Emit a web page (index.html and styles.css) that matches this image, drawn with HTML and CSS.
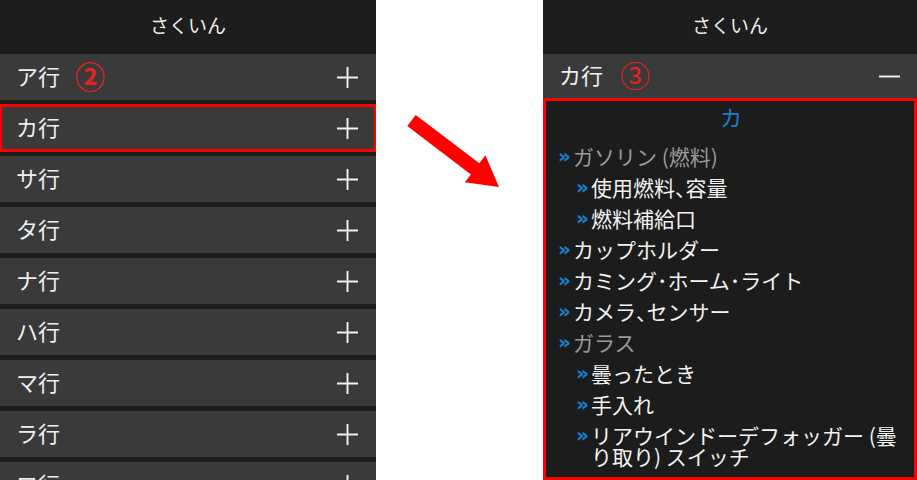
FILE: index.html
```html
<!DOCTYPE html>
<html lang="ja">
<head>
<meta charset="UTF-8">
<meta name="viewport" content="width=device-width, initial-scale=1.0">
<title>さくいん</title>
<link rel="stylesheet" href="styles.css">
</head>
<body>
<div class="screen">
  <!-- before: index list, all closed -->
  <div class="panel panel-left">
    <div class="panel-header">さくいん</div>
    <div class="row"><span class="row-label">ア行</span><span class="step step-bold">②</span><svg class="toggle" viewBox="0 0 22 22"><path d="M0 11H22M11 0V22"/></svg></div>
    <div class="row row-marked"><span class="row-label">カ行</span><svg class="toggle" viewBox="0 0 22 22"><path d="M0 11H22M11 0V22"/></svg></div>
    <div class="row"><span class="row-label">サ行</span><svg class="toggle" viewBox="0 0 22 22"><path d="M0 11H22M11 0V22"/></svg></div>
    <div class="row"><span class="row-label">タ行</span><svg class="toggle" viewBox="0 0 22 22"><path d="M0 11H22M11 0V22"/></svg></div>
    <div class="row"><span class="row-label">ナ行</span><svg class="toggle" viewBox="0 0 22 22"><path d="M0 11H22M11 0V22"/></svg></div>
    <div class="row"><span class="row-label">ハ行</span><svg class="toggle" viewBox="0 0 22 22"><path d="M0 11H22M11 0V22"/></svg></div>
    <div class="row"><span class="row-label">マ行</span><svg class="toggle" viewBox="0 0 22 22"><path d="M0 11H22M11 0V22"/></svg></div>
    <div class="row"><span class="row-label">ラ行</span><svg class="toggle" viewBox="0 0 22 22"><path d="M0 11H22M11 0V22"/></svg></div>
    <div class="row"><span class="row-label">ワ行</span><svg class="toggle" viewBox="0 0 22 22"><path d="M0 11H22M11 0V22"/></svg></div>
  </div>

  <div class="gutter">
    <svg class="arrow" viewBox="376 0 167 200">
      <polygon points="415.7,114.9 479.3,163.2 485.4,155.3 499,187 464.8,182.3 470.9,174.4 407.3,126.1"/>
    </svg>
  </div>

  <!-- after: カ行 opened -->
  <div class="panel panel-right">
    <div class="panel-header">さくいん</div>
    <div class="row"><span class="row-label">カ行</span><span class="step step-thin">③</span><svg class="toggle" viewBox="0 0 22 22"><path d="M0 11H22"/></svg></div>
    <div class="index-body">
      <div class="index-kana">カ</div>
      <ul class="index-list">
        <li><div class="entry entry-group"><span class="mark">»</span><span>ガソリン (燃料)</span></div>
          <ul class="index-list sub">
            <li><div class="entry"><span class="mark">»</span><span>使用燃料<span class="punct">、</span>容量</span></div></li>
            <li><div class="entry"><span class="mark">»</span><span>燃料補給口</span></div></li>
          </ul>
        </li>
        <li><div class="entry"><span class="mark">»</span><span>カップホルダー</span></div></li>
        <li><div class="entry"><span class="mark">»</span><span>カミング･ホーム･ライト</span></div></li>
        <li><div class="entry"><span class="mark">»</span><span>カメラ<span class="punct">、</span>センサー</span></div></li>
        <li><div class="entry entry-group"><span class="mark">»</span><span>ガラス</span></div>
          <ul class="index-list sub">
            <li><div class="entry"><span class="mark">»</span><span>曇ったとき</span></div></li>
            <li><div class="entry"><span class="mark">»</span><span>手入れ</span></div></li>
            <li><div class="entry"><span class="mark">»</span><span>リアウインドーデフォッガー (曇り取り) スイッチ</span></div></li>
          </ul>
        </li>
      </ul>
    </div>
  </div>
</div>
</body>
</html>
```

FILE: styles.css
```css
/* index screens */
body {
  margin: 0;
  background: #fff;
  font-family: "Noto Sans CJK JP", sans-serif;
}

.screen {
  display: flex;
  height: 480px;
  overflow: hidden;
}

.panel {
  display: flex;
  flex-direction: column;
  background: #1d1d1d;
  overflow: hidden;
}

.panel-left {
  width: 376px;
}

.panel-right {
  width: 374px;
}

.gutter {
  width: 167px;
}

.arrow {
  display: block;
  width: 167px;
  height: 200px;
  fill: #ff0000;
}

.panel-header {
  flex: none;
  height: 54px;
  line-height: 50px;
  text-align: center;
  color: #eee;
  font-size: 19px;
}

.row {
  flex: none;
  display: flex;
  align-items: center;
  box-sizing: border-box;
  height: 46px;
  margin-bottom: 5px;
  padding: 0 18px 4px 16px;
  background: #3a3a3a;
  color: #f0f0f0;
}

.panel-right .row {
  margin-bottom: 0;
  height: 44px;
  padding-right: 17px;
}

.row-marked {
  outline: 3px solid #f00;
  outline-offset: -2px;
}

.row-label {
  font-size: 22px;
  line-height: 30px;
}

.step {
  margin-left: 15px;
  color: #e52222;
  font-size: 30px;
  line-height: 30px;
}

.step-bold {
  font-weight: bold;
}

.step-thin {
  margin-left: 17px;
}

.toggle {
  margin-left: auto;
  margin-top: 4px;
  width: 21px;
  height: 21px;
  stroke: #f2f2f2;
  stroke-width: 2;
  fill: none;
}

.index-body {
  flex: 1;
  border: 3px solid #f00;
  padding: 1px 4px 0 12px;
  background: #1c1c1c;
}

.index-kana {
  text-align: center;
  color: #1a80cc;
  font-size: 22px;
  line-height: 28px;
  margin-bottom: 16px;
  padding-right: 6px;
}

.index-list {
  list-style: none;
  margin: 0;
  padding: 0;
}

.index-list li + li,
.index-list.sub {
  margin-top: 10px;
}

.index-list.sub {
  margin-left: 18px;
}

.entry {
  display: flex;
  color: #f2f2f2;
  font-size: 21px;
  line-height: 21px;
}

.entry-group {
  color: #999;
}

.punct {
  font-feature-settings: "halt";
}

.mark {
  flex: none;
  width: 15px;
  color: #1a80cc;
  font-size: 20px;
  line-height: 20px;
  font-weight: bold;
  font-family: "DejaVu Sans", sans-serif;
}
```
